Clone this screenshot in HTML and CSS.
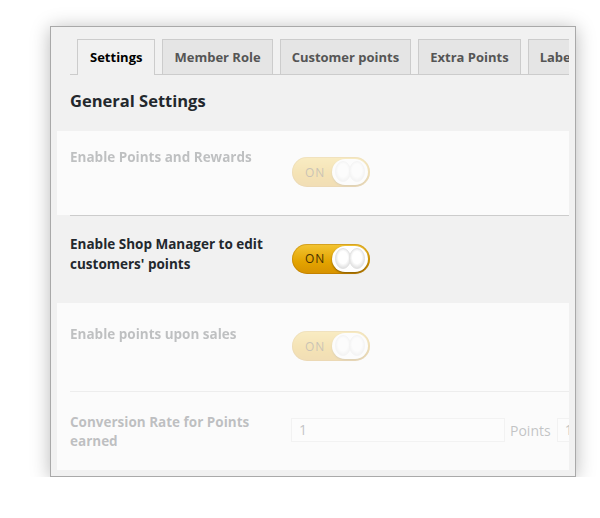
FILE: index.html
```html
<!DOCTYPE html>
<html lang="en">
<head>
<meta charset="utf-8">
<title>Points and Rewards Settings</title>
<link rel="stylesheet" href="styles.css">
</head>
<body>
<svg class="defs" width="0" height="0" aria-hidden="true">
  <defs>
    <radialGradient id="kg" cx="0.5" cy="0.45" r="0.55"><stop offset="0.55" stop-color="#ffffff"/><stop offset="1" stop-color="#dedede"/></radialGradient>
  </defs>
</svg>
<div class="window">
  <div class="viewport">
    <nav class="tabs">
      <span class="tab active">Settings</span>
      <span class="tab">Member Role</span>
      <span class="tab">Customer points</span>
      <span class="tab">Extra Points</span>
      <span class="tab">Labels</span>
    </nav>
    <h2 class="heading">General Settings</h2>

    <div class="block faded">
      <div class="row r1">
        <div class="label">Enable Points and Rewards</div>
        <div class="control">
          <span class="toggle"><span class="on">ON</span><span class="knob"><svg viewBox="0 0 36 26" width="36" height="26"><ellipse cx="11" cy="12.5" rx="7.5" ry="10" fill="url(#kg)" stroke="#e2e2e2" stroke-width="1"/><ellipse cx="25" cy="12.5" rx="7.5" ry="10" fill="url(#kg)" stroke="#e2e2e2" stroke-width="1"/></svg></span></span>
        </div>
      </div>
    </div>

    <div class="block">
      <div class="row r2 sep">
        <div class="label dark">Enable Shop Manager to edit customers' points</div>
        <div class="control">
          <span class="toggle"><span class="on">ON</span><span class="knob"><svg viewBox="0 0 36 26" width="36" height="26"><ellipse cx="11" cy="12.5" rx="7.5" ry="10" fill="url(#kg)" stroke="#e2e2e2" stroke-width="1"/><ellipse cx="25" cy="12.5" rx="7.5" ry="10" fill="url(#kg)" stroke="#e2e2e2" stroke-width="1"/></svg></span></span>
        </div>
      </div>
    </div>

    <div class="block faded">
      <div class="row r3">
        <div class="label">Enable points upon sales</div>
        <div class="control">
          <span class="toggle"><span class="on">ON</span><span class="knob"><svg viewBox="0 0 36 26" width="36" height="26"><ellipse cx="11" cy="12.5" rx="7.5" ry="10" fill="url(#kg)" stroke="#e2e2e2" stroke-width="1"/><ellipse cx="25" cy="12.5" rx="7.5" ry="10" fill="url(#kg)" stroke="#e2e2e2" stroke-width="1"/></svg></span></span>
        </div>
      </div>
      <div class="row r4 sep">
        <div class="label">Conversion Rate for Points earned</div>
        <div class="control">
          <span class="input wide">1</span>
          <span class="unit">Points</span>
          <span class="input">1</span>
        </div>
      </div>
    </div>
  </div>
</div>
</body>
</html>
```
FILE: styles.css
```css
html, body {
  margin: 0;
  background: #ffffff;
}
body {
  font-family: "Open Sans", "Noto Sans", sans-serif;
  color: #23282d;
}
.defs {
  position: absolute;
  width: 0;
  height: 0;
}
.window {
  margin: 26px 0 0 50px;
  width: 524px;
  height: 449px;
  border: 1px solid #a9a9a9;
  background: #f1f1f1;
  box-shadow: 0 2px 18px rgba(0, 0, 0, 0.28);
}
.viewport {
  margin: 0 6px;
  padding-top: 12px;
  overflow: hidden;
  height: 431px;
}
.tabs {
  display: flex;
  margin-left: 13px;
  padding-left: 7px;
  border-bottom: 1px solid #cccccc;
  white-space: nowrap;
  height: 35px;
  gap: 7px;
}
.tab {
  flex: none;
  box-sizing: border-box;
  height: 35px;
  padding: 0 11px;
  border: 1px solid #cccccc;
  border-bottom: none;
  background: #e5e5e5;
  color: #555555;
  font-weight: 700;
  font-size: 13px;
  line-height: 34px;
}
.tab.active {
  background: #f1f1f1;
  color: #000000;
  height: 36px;
  margin-bottom: -1px;
  padding: 0 12px;
}
.heading {
  margin: 0;
  padding: 16px 0 0 13px;
  height: 40px;
  font-size: 16.5px;
  font-weight: 700;
  color: #23282d;
  line-height: 20px;
}
.block.faded {
  background: #fbfbfb;
}
.block.faded .row {
  opacity: 0.28;
}
.row {
  display: flex;
  margin-left: 13px;
  box-sizing: border-box;
}
.row.sep {
  border-top: 1px solid #cccccc;
}
.r1 { height: 84px; }
.r2 { height: 88px; }
.r3 { height: 88px; }
.r4 { height: 79px; }
.label {
  flex: 0 0 222px;
  box-sizing: border-box;
  padding: 16px 20px 0 0;
  font-size: 13.5px;
  font-weight: 700;
  line-height: 20px;
  color: #23282d;
}
.label.dark {
  padding-top: 18px;
}
.r3 .label {
  padding-top: 21px;
}
.r4 .label {
  padding-top: 21px;
  line-height: 19px;
}
.control {
  display: flex;
  align-items: center;
  flex: 1;
  white-space: nowrap;
  padding-bottom: 2px;
}
.toggle {
  position: relative;
  display: inline-flex;
  align-items: center;
  box-sizing: border-box;
  width: 78px;
  height: 30px;
  border-radius: 15px;
  background: linear-gradient(#f3c534, #e3a300 60%, #d79200);
  box-shadow: inset 0 0 0 1px rgba(160, 100, 0, 0.35);
}
.on {
  margin-left: 13px;
  font-size: 12px;
  font-weight: 400;
  letter-spacing: 0.8px;
  color: #4a3200;
}
.knob {
  position: absolute;
  right: 2px;
  top: 2px;
  width: 36px;
  height: 26px;
  border-radius: 13px;
  background: #ffffff;
  box-shadow: 0 1px 2px rgba(0, 0, 0, 0.4);
  overflow: hidden;
}
.knob svg {
  display: block;
}
.input {
  box-sizing: border-box;
  height: 24px;
  width: 40px;
  border: 1px solid #dddddd;
  background: #ffffff;
  padding: 0 7px;
  font-size: 14px;
  line-height: 22px;
  color: #32373c;
  flex: none;
}
.input.wide {
  width: 214px;
  margin-left: -1px;
}
.unit {
  margin: 0 6px 0 5px;
  font-size: 14px;
  color: #32373c;
}
```
